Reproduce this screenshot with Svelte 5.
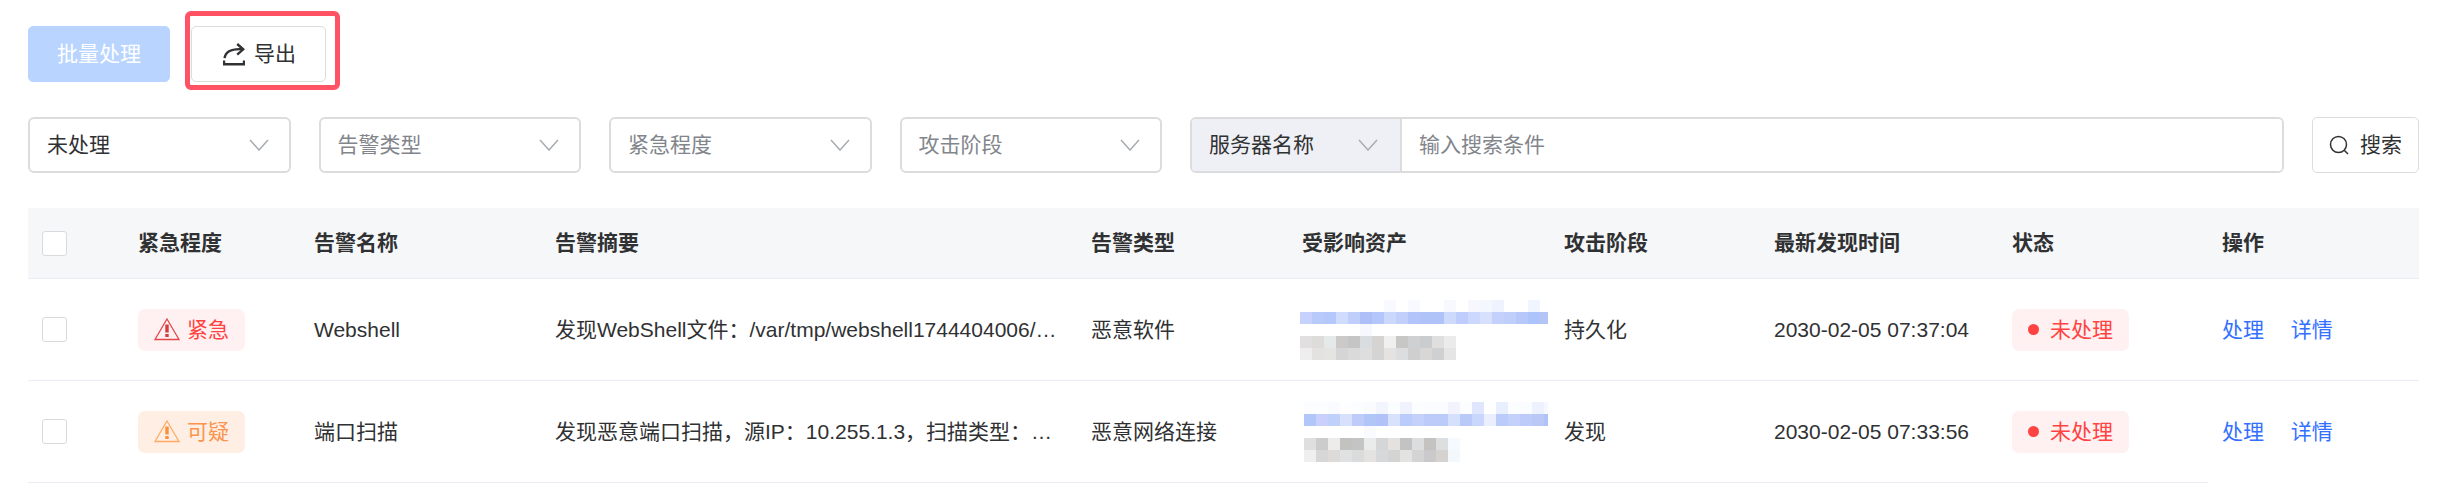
<script>
  const filters = [
    { id: 'status', label: '处理状态', options: ['未处理', '已处理'], filled: true },
    { id: 'type', label: '告警类型', options: ['告警类型', '恶意软件', '恶意网络连接'] },
    { id: 'level', label: '紧急程度', options: ['紧急程度', '紧急', '可疑'] },
    { id: 'stage', label: '攻击阶段', options: ['攻击阶段', '持久化', '发现'] }
  ]

  const columns = [
    { key: 'level', title: '紧急程度' },
    { key: 'name', title: '告警名称' },
    { key: 'summary', title: '告警摘要' },
    { key: 'type', title: '告警类型' },
    { key: 'asset', title: '受影响资产' },
    { key: 'stage', title: '攻击阶段' },
    { key: 'time', title: '最新发现时间' },
    { key: 'status', title: '状态' },
    { key: 'actions', title: '操作' }
  ]

  // masked asset names, one list of colours per line of 12px cells
  const alerts = [
    {
      id: 1,
      level: '紧急',
      levelClass: 'urgent',
      name: 'Webshell',
      summary: '发现WebShell文件：/var/tmp/webshell1744404006/…',
      type: '恶意软件',
      stage: '持久化',
      time: '2030-02-05 07:37:04',
      status: '未处理',
      maskStart: 0,
      mask: [
        '- - - - - - - f9faff - f9faff - - f8f9ff - f6f8fe f4f7fe eef3ff - - f1f5ff -',
        'c6d2fd b8caf9 b5c8fb d0dcfe c0cefb adbff7 b4c6fa cbd7fb c1cffa b2c4f9 b0c3f8 b0c3f8 cedafc bfcdfc ccd8fd d7e1fd c4d1fd c0cefb b5c8f9 adc3fb b4c4f7',
        '- - - - - f7f8fe',
        'e1dfe0 dddcda e6e9ea cbcac8 c5c5c5 d9dde0 d5d4d2 f0f0f0 c7c7c5 cfd0d1 cbccce dfdfdf ebebeb',
        'eeeeee e3e2e0 e4e4e2 d5d5d5 dadada dedede d4d4d4 e4e3e1 dcdddf cfcfcf d9d7d5 ced0d2 e5e5e5'
      ]
    },
    {
      id: 2,
      level: '可疑',
      levelClass: 'suspicious',
      name: '端口扫描',
      summary: '发现恶意端口扫描，源IP：10.255.1.3，扫描类型：…',
      type: '恶意网络连接',
      stage: '发现',
      time: '2030-02-05 07:33:56',
      status: '未处理',
      maskStart: 4,
      mask: [
        'fcfdff fcfdff f9fbff fefefe fcfdff fafbff f2f5fe fcfdff f0f2fd fcfdff fbfcff fbfcff f2f3fd fcfdff e0e6fd - e8effe fcfdff fbfcff eef2fe f5f9ff',
        'b2c7f9 c9d0fb bfd0fb d7e0fc bfcbf9 b0c6f9 b1c2f8 d9e2fd b9ccfb c4d1fb bdcbf9 bbccfb d5e0fc b9caf9 c9d7fc eaeefd bbccfa c3d1fb bccbf9 bac8f8 aec4f8',
        '- - - - - fafbff',
        'dfdfdf cccccc edecea c2c2c0 c4c4c4 eaecec d4d6d8 e5e1de c3c3c3 dbdddf c4c3c1 dddee0 f4faff',
        'efefef d7d7d7 dcdbd9 dfe1e3 dadbdb e4e3e1 d6d8da d4d4d4 e3e3e1 d4d4d4 cacacc d6d2cf f2f8fc'
      ]
    }
  ]

  function toCells(alert) {
    return alert.mask.flatMap((line, row) =>
      line
        .split(' ')
        .map((color, col) => ({ color, x: alert.maskStart + col * 12, y: row * 12 }))
        .filter((cell) => cell.color !== '-')
    )
  }

  let selected = []
  let keyword = ''

  $: allSelected = selected.length === alerts.length

  function toggleAll() {
    selected = allSelected ? [] : alerts.map((a) => a.id)
  }
</script>

<div class="alerts-page">
  <!-- Toolbar -->
  <div class="toolbar">
    <button class="btn batch-btn" disabled={selected.length === 0}>批量处理</button>
    <div class="highlight">
      <button class="btn export-btn">
        <svg class="export-icon" viewBox="0 0 22 23" aria-hidden="true">
          <path d="M1.6 15.2C2.3 9.2 7 5.6 19 6.2" />
          <path d="M14.2 1L20.2 6.3L14.2 11.6" />
          <path d="M1 17.6V21.2H21V17.6" />
        </svg>
        <span>导出</span>
      </button>
    </div>
  </div>

  <!-- Filters -->
  <div class="filter-bar">
    <div class="filters">
      {#each filters as f}
        <div class="select-wrap">
          <select id={f.id} aria-label={f.label} class:filled={f.filled}>
            {#each f.options as option}
              <option>{option}</option>
            {/each}
          </select>
          <svg class="chevron" viewBox="0 0 20 12" aria-hidden="true"><path d="M1 1L10 11L19 1" /></svg>
        </div>
      {/each}
    </div>
    <div class="search-group">
      <div class="select-wrap prepend">
        <select aria-label="搜索字段">
          <option>服务器名称</option>
        </select>
        <svg class="chevron" viewBox="0 0 20 12" aria-hidden="true"><path d="M1 1L10 11L19 1" /></svg>
      </div>
      <input type="text" aria-label="搜索条件" placeholder="输入搜索条件" bind:value={keyword} />
    </div>
    <button class="btn search-btn">
      <svg class="search-icon" viewBox="0 0 20 20" aria-hidden="true">
        <circle cx="9.5" cy="9.5" r="8" />
        <path d="M15.2 15.2L19 19" />
      </svg>
      <span>搜索</span>
    </button>
  </div>

  <!-- Alerts table -->
  <table>
    <colgroup>
      <col class="w-check" />
      {#each columns as c}
        <col class="w-{c.key}" />
      {/each}
    </colgroup>
    <thead>
      <tr>
        <th><input type="checkbox" aria-label="全选" checked={allSelected} on:change={toggleAll} /></th>
        {#each columns as c}
          <th>{c.title}</th>
        {/each}
      </tr>
    </thead>
    <tbody>
      {#each alerts as a}
        <tr>
          <td><input type="checkbox" aria-label={a.name} value={a.id} bind:group={selected} /></td>
          <td>
            <span class="badge {a.levelClass}">
              <svg class="warn-icon" viewBox="0 0 26 23" aria-hidden="true">
                <path class="outline" d="M13 1L25 21.5H1Z" />
                <path class="mark" d="M11.3 6.5H14.7V14.5H11.3ZM11.3 16H14.7V19H11.3Z" />
              </svg>
              {a.level}
            </span>
          </td>
          <td>{a.name}</td>
          <td class="summary">{a.summary}</td>
          <td>{a.type}</td>
          <td class="asset">
            <svg class="mosaic" viewBox="0 0 248 60" role="img" aria-label="资产信息">
              {#each toCells(a) as cell}
                <rect x={cell.x} y={cell.y} width="12" height="12" fill="#{cell.color}" />
              {/each}
            </svg>
          </td>
          <td>{a.stage}</td>
          <td>{a.time}</td>
          <td>
            <span class="badge status"><i class="dot"></i>{a.status}</span>
          </td>
          <td class="actions">
            <a href="#handle">处理</a>
            <a href="#detail">详情</a>
          </td>
        </tr>
      {/each}
    </tbody>
  </table>
</div>

<style>
  :global(body) {
    margin: 0;
    background: #fff;
  }

  .alerts-page {
    padding: 26px 21px 8px 28px;
    color: #303133;
    font-family: 'Liberation Sans', 'Noto Sans CJK SC', sans-serif;
    font-size: 21px;
    line-height: 30px;
  }

  button, select, input {
    font: inherit;
    color: inherit;
    box-sizing: border-box;
    margin: 0;
  }

  svg { display: block; fill: none; }

  .toolbar {
    display: flex;
    gap: 21px;
    margin-bottom: 35px;
  }

  .btn {
    display: flex;
    align-items: center;
    justify-content: center;
    gap: 11px;
    height: 56px;
    padding: 0 16px;
    background: #fff;
    border: 1px solid #dcdcdc;
    border-radius: 5px;
    white-space: nowrap;
    cursor: pointer;
  }

  .batch-btn {
    padding: 0 28px;
    color: #fff;
    background: #b9d5ff;
    border-color: #b9d5ff;
  }

  .export-btn {
    gap: 9px;
    padding: 0 29px 0 31px;
  }

  .highlight { position: relative; }

  .highlight::after {
    content: '';
    position: absolute;
    inset: -15px -14px -8px -6px;
    border: 5px solid #ff5264;
    border-radius: 6px;
    pointer-events: none;
  }

  .export-icon {
    width: 22px;
    height: 23px;
    stroke: #303133;
    stroke-width: 2.4;
  }

  .filter-bar {
    display: grid;
    grid-template-columns: 1134fr 1094fr auto;
    gap: 28px;
    margin-bottom: 35px;
  }

  .filters {
    display: grid;
    grid-template-columns: repeat(4, 1fr);
    gap: 28px;
  }

  .select-wrap { position: relative; }

  select {
    display: block;
    width: 100%;
    height: 56px;
    padding: 0 48px 0 17px;
    color: #82858c;
    background: #fff;
    border: 2px solid #dcdcdc;
    border-radius: 6px;
    appearance: none;
  }

  select.filled { color: #303133; }

  .chevron {
    position: absolute;
    top: 22px;
    right: 22px;
    width: 20px;
    height: 12px;
    stroke: #a8abb2;
    stroke-width: 1.5;
    pointer-events: none;
  }

  .search-group {
    display: flex;
    border: 2px solid #dcdcdc;
    border-radius: 6px;
    height: 56px;
    box-sizing: border-box;
    overflow: hidden;
  }

  .prepend {
    flex: 0 0 210px;
    box-sizing: border-box;
    background: #eff0f5;
    border-right: 2px solid #dcdcdc;
  }

  .prepend select {
    height: 52px;
    color: #303133;
    background: transparent;
    border: none;
    border-radius: 0;
  }

  .prepend .chevron { top: 20px; }

  .search-group input {
    flex: 1;
    min-width: 0;
    padding: 0 17px;
    border: none;
    outline: none;
  }

  .search-group input::placeholder {
    color: #82858c;
    opacity: 1;
  }

  .search-icon {
    width: 20px;
    height: 20px;
    stroke: #303133;
    stroke-width: 1.5;
  }

  table {
    width: 100%;
    table-layout: fixed;
    border-collapse: separate;
    border-spacing: 0;
  }

  .w-check { width: 96px; }
  .w-level { width: 176px; }
  .w-name { width: 241px; }
  .w-type { width: 211px; }
  .w-asset { width: 262px; }
  .w-stage { width: 210px; }
  .w-time { width: 238px; }
  .w-status { width: 210px; }
  .w-actions { width: 211px; }

  th, td {
    box-sizing: content-box;
    padding: 0 14px;
    border-bottom: 1px solid #e9ecf5;
    text-align: left;
    vertical-align: middle;
    white-space: nowrap;
  }

  th {
    height: 70px;
    background: #f6f7f9;
    font-weight: 700;
  }

  td { height: 101px; }

  tbody tr:last-child .actions { border-bottom-color: transparent; }

  .summary {
    overflow: hidden;
    text-overflow: ellipsis;
  }

  .asset { padding: 0 0 0 12px; }

  .mosaic {
    width: 248px;
    height: 60px;
    shape-rendering: crispEdges;
  }

  input[type='checkbox'] {
    display: block;
    width: 25px;
    height: 25px;
    appearance: none;
    background: #fff;
    border: 1px solid #d8dade;
    border-radius: 3px;
  }

  input[type='checkbox']:checked { background: #3d7fff; }

  .badge {
    display: inline-flex;
    align-items: center;
    height: 42px;
    padding: 0 16px;
    border-radius: 7px;
    vertical-align: middle;
  }

  .urgent, .status {
    color: #ff4242;
    background: #fff1f1;
  }

  .suspicious {
    color: #fb934c;
    background: #ffeee3;
  }

  .warn-icon {
    width: 26px;
    height: 23px;
    margin-right: 7px;
  }

  .warn-icon .outline {
    stroke: #e2484c;
    stroke-width: 1.3;
  }

  .warn-icon .mark { fill: #d63b3f; }
  .suspicious .outline { stroke: #ffab66; }
  .suspicious .mark { fill: #fb8f3c; }

  .dot {
    width: 11px;
    height: 11px;
    margin-right: 11px;
    border-radius: 50%;
    background: #ff4242;
  }

  a {
    margin-right: 21px;
    color: #3370ff;
    text-decoration: none;
  }
</style>
